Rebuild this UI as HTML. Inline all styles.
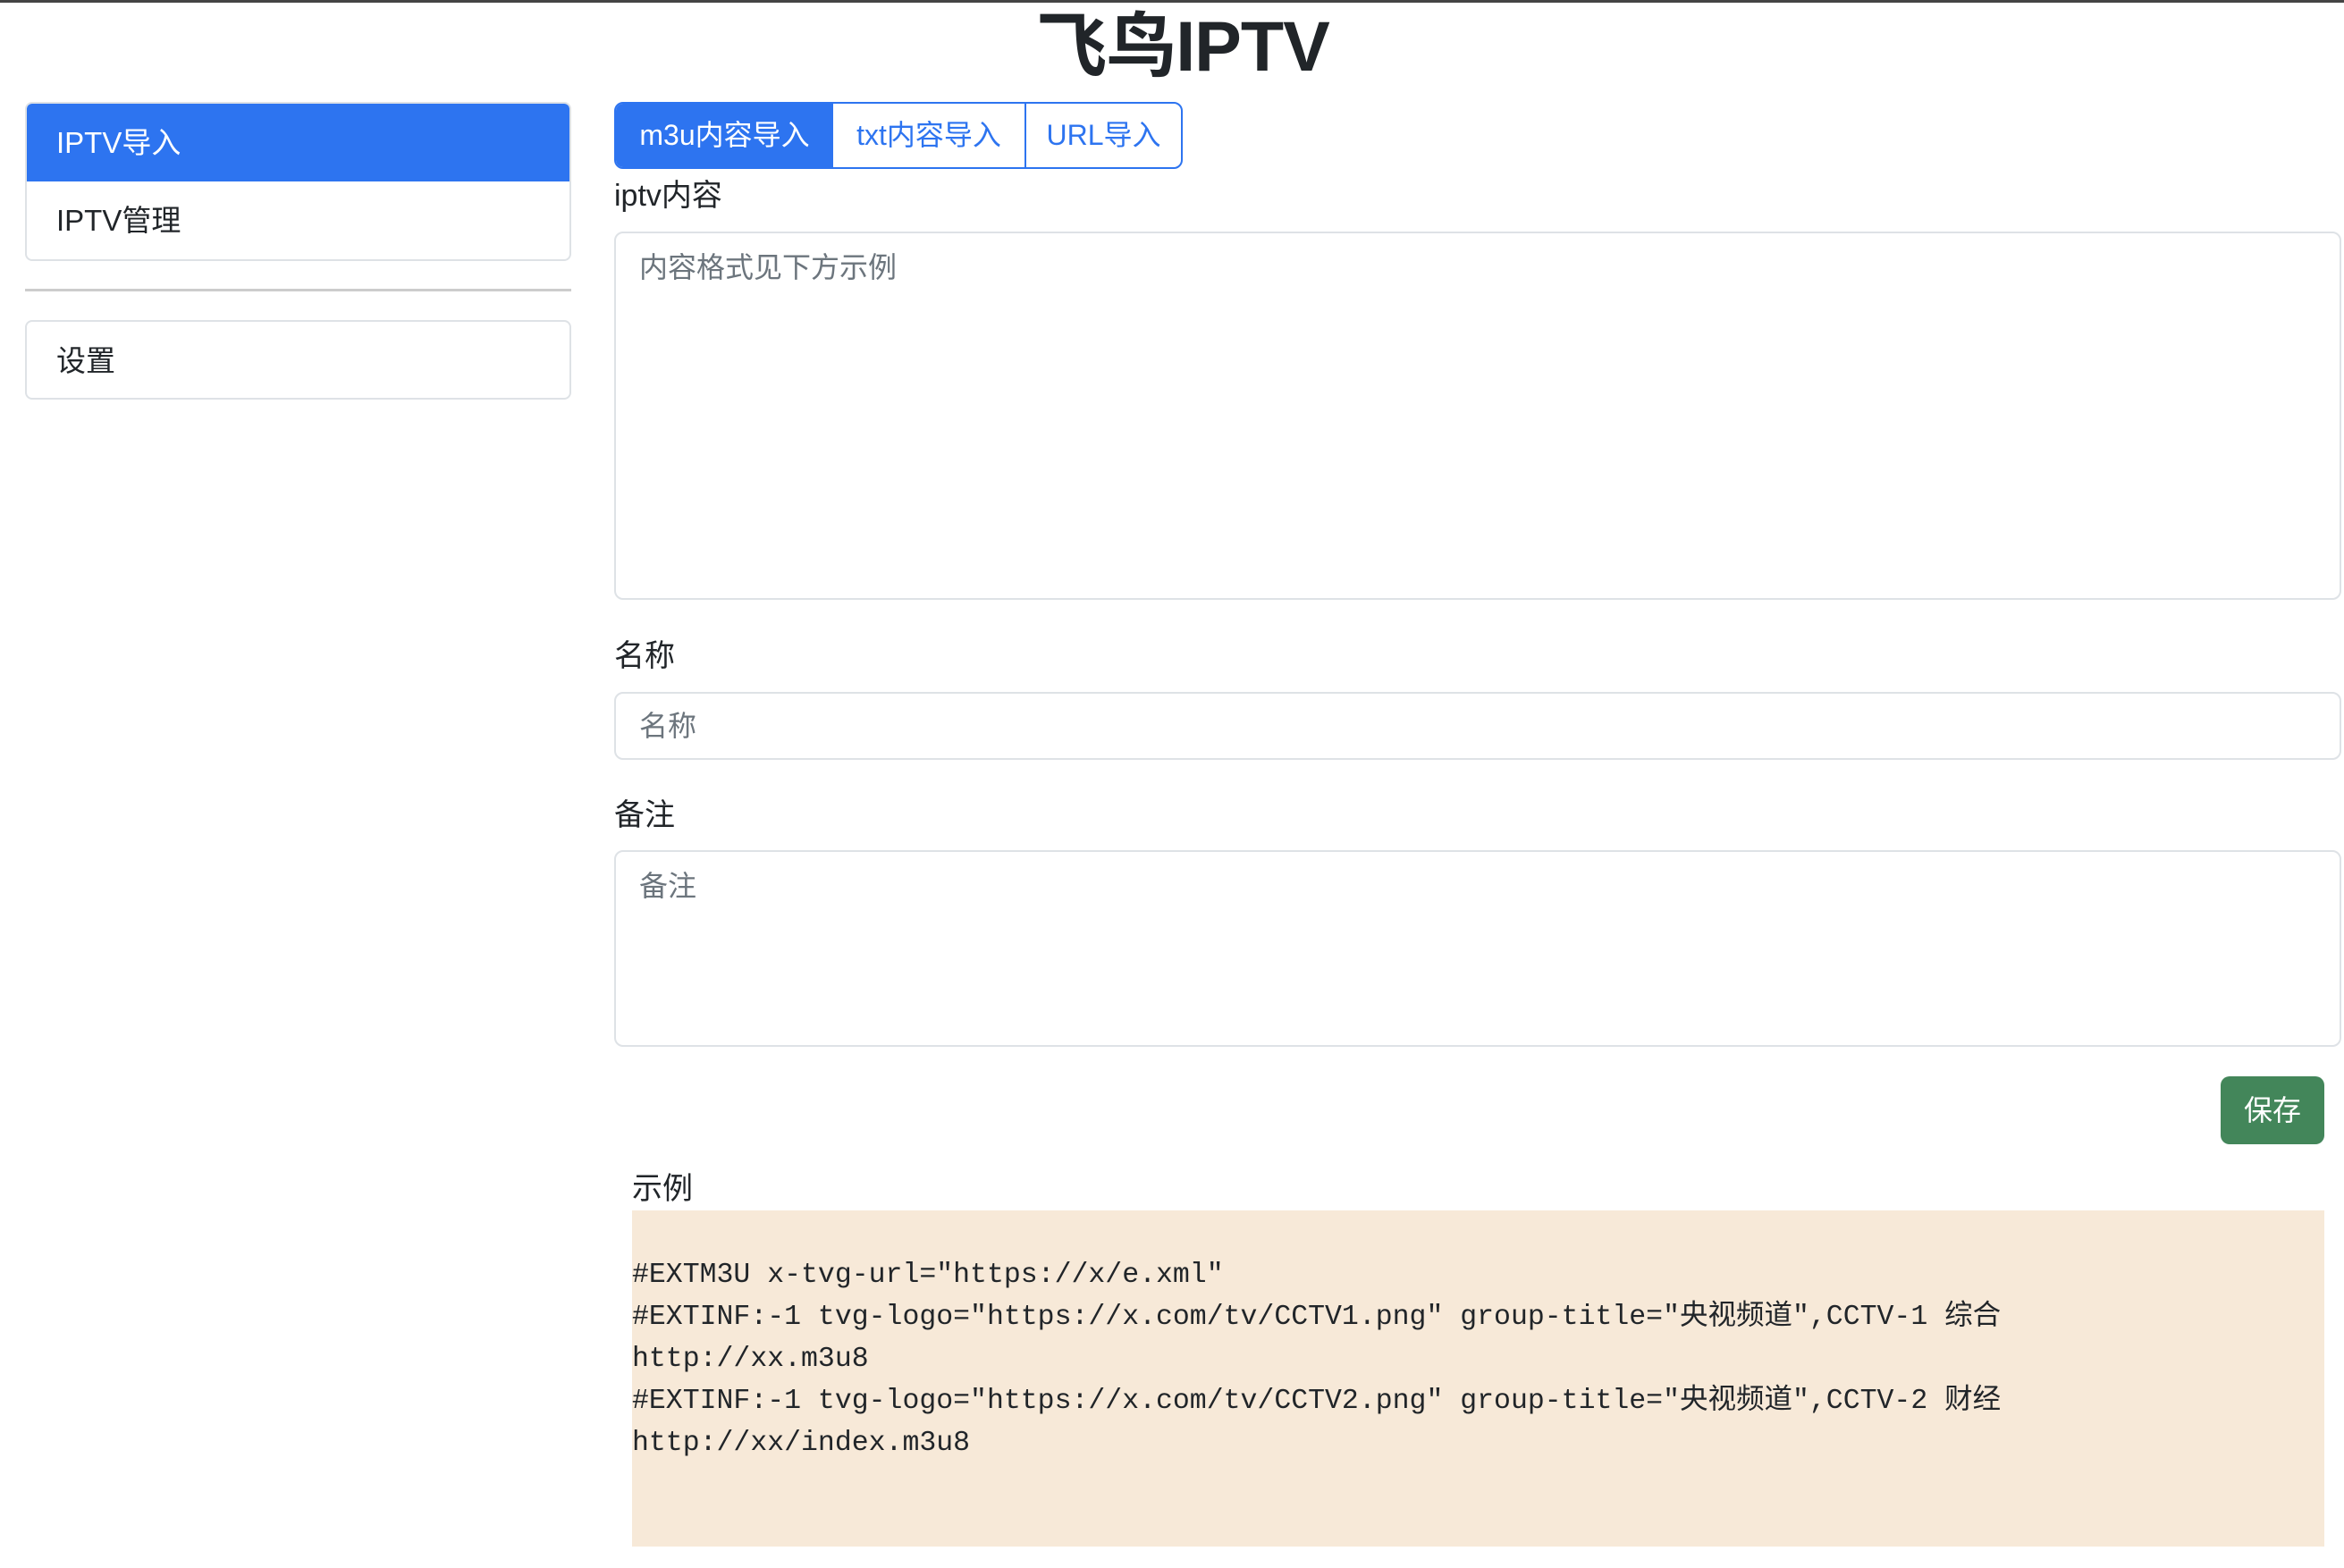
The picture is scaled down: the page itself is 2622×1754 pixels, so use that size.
<!DOCTYPE html>
<html><head><meta charset="utf-8"><style>
*{box-sizing:border-box;margin:0;padding:0}
body{width:2622px;height:1754px;position:relative;background:#fff;font-family:"Liberation Sans","Noto Sans CJK SC",sans-serif;color:#212529;overflow:hidden}
.a{position:absolute}
.topbar{left:0;top:0;width:2622px;height:3px;background:#444}
h1{position:absolute;left:0;width:2646px;top:2px;text-align:center;font-size:79px;font-weight:700;line-height:100px;color:#212529;letter-spacing:-1px}
.nav{left:28px;width:611px;border:2px solid #dee2e6;border-radius:8px;overflow:hidden}
.nav div{height:87px;line-height:87px;padding-left:33px;font-size:33px}
.act{background:#2d74f0;color:#fff}
.tabs{left:687px;top:114px;width:636px;height:75px;border:2px solid #2d74f0;border-radius:10px;overflow:hidden;display:flex}
.tabs div{font-size:32px;line-height:71px;text-align:center;color:#2d74f0}
.lbl{font-size:34px;left:687px}
.box{left:687px;width:1932px;border:2px solid #dee2e6;border-radius:10px;font-size:32px;color:#6c757d;padding-left:26px}
pre{position:absolute;left:707px;top:1354px;width:1893px;height:376px;background:#f7e9d8;font-family:"Liberation Mono","Noto Sans CJK SC",monospace;font-size:31.5px;line-height:47px;padding-top:49px;color:#212529}
</style></head><body>
<div class="a topbar"></div>
<h1>飞鸟IPTV</h1>
<div class="a nav" style="top:114px;height:178px"><div class="act">IPTV导入</div><div>IPTV管理</div></div>
<div class="a" style="left:28px;top:323px;width:611px;height:3px;background:#ccc"></div>
<div class="a nav" style="top:358px;height:89px"><div>设置</div></div>
<div class="a tabs"><div class="act" style="width:243px;color:#fff">m3u内容导入</div><div style="width:216px;border-right:2px solid #2d74f0;border-left:0">txt内容导入</div><div style="flex:1">URL导入</div></div>
<div class="a lbl" style="top:191px">iptv内容</div>
<div class="a box" style="top:259px;height:412px;padding-top:13px">内容格式见下方示例</div>
<div class="a lbl" style="top:706px">名称</div>
<div class="a box" style="top:774px;height:76px;line-height:72px">名称</div>
<div class="a lbl" style="top:884px">备注</div>
<div class="a box" style="top:951px;height:220px;padding-top:13px">备注</div>
<div class="a" style="left:2484px;top:1204px;width:116px;height:76px;background:#43865a;border-radius:10px;color:#fff;font-size:32px;line-height:76px;text-align:center">保存</div>
<div class="a lbl" style="left:707px;top:1302px">示例</div>
<pre>#EXTM3U x-tvg-url="https://x/e.xml"
#EXTINF:-1 tvg-logo="https://x.com/tv/CCTV1.png" group-title="央视频道",CCTV-1 综合
http://xx.m3u8
#EXTINF:-1 tvg-logo="https://x.com/tv/CCTV2.png" group-title="央视频道",CCTV-2 财经
http://xx/index.m3u8</pre>
</body></html>
